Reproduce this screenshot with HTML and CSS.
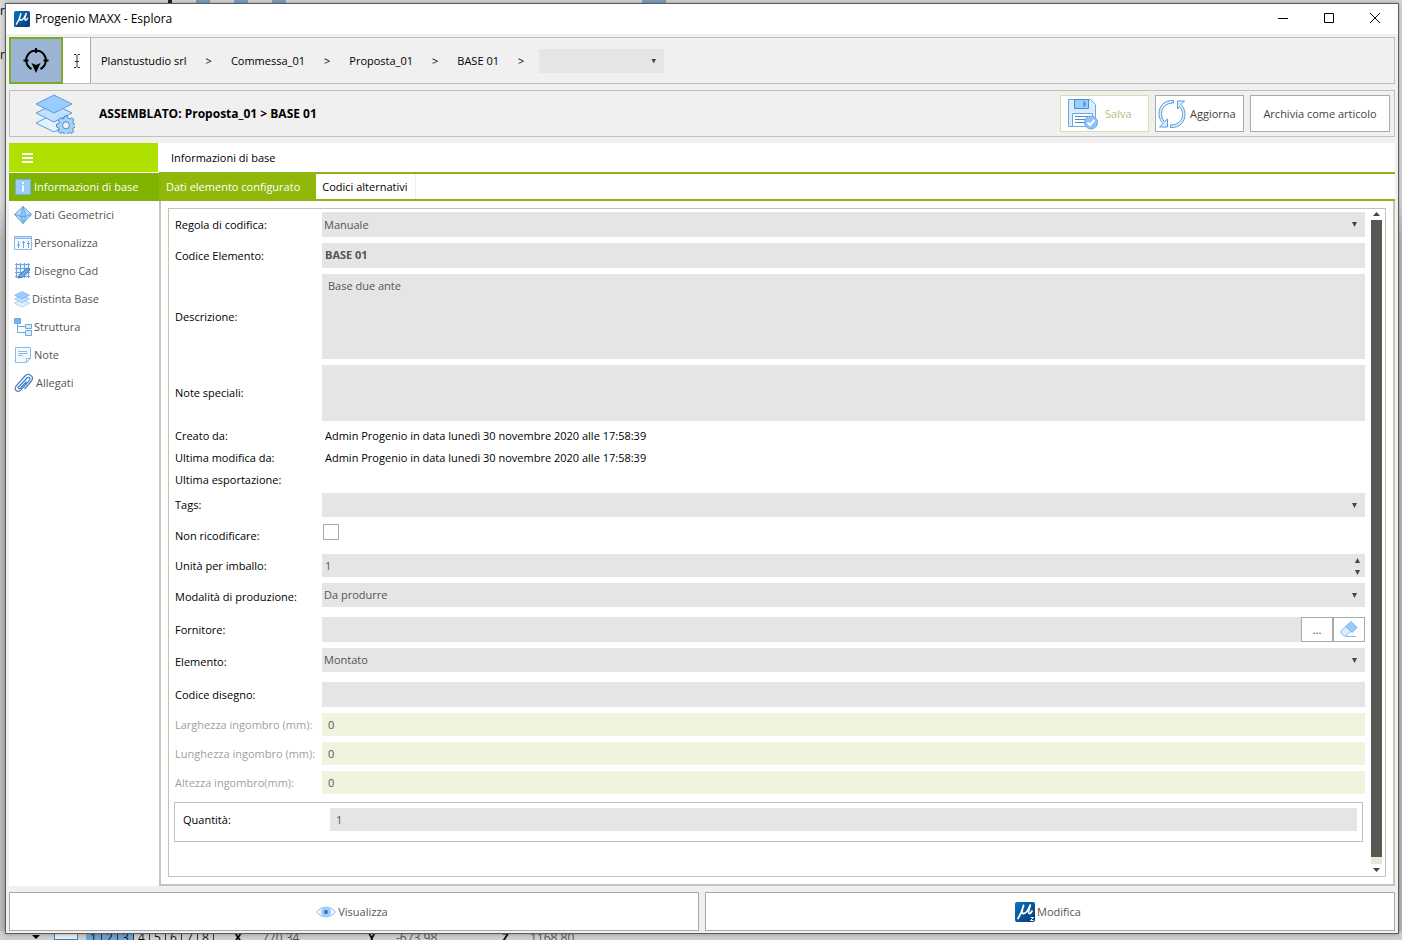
FILE: index.html
```
<!DOCTYPE html>
<html lang="it">
<head>
<meta charset="utf-8">
<title>Progenio MAXX - Esplora</title>
<link rel="stylesheet" href="styles.css">
</head>
<body>
<svg class="defs" aria-hidden="true">
  <defs>
    <linearGradient id="blue" x1="0" y1="0" x2="1" y2="1"><stop offset="0" stop-color="#0873c4"/><stop offset="1" stop-color="#083a70"/></linearGradient>
    <symbol id="mu" viewBox="0 0 20 20">
      <rect width="20" height="20" rx="2" fill="url(#blue)"/>
      <path d="M8.500 3.500C7.500 8 6 12 3 16.500M8.500 4C6.500 9 6.500 11.500 8.500 11.500c2.500 0 5-4 7-9-1.500 4.500-2.800 8.500-1.200 9 1 .3 2-1 2.700-2.500" fill="none" stroke="#fff" stroke-width="1.800" stroke-linecap="round"/>
    </symbol>
    <symbol id="layers" viewBox="0 0 38 38">
      <path d="m1 29 18-9 18 9-18 9z" fill="#e3f2ff" stroke="#5a9bd8"/>
      <path d="m1 19 18-9 18 9-18 9z" fill="#bfe0ff" stroke="#5a9bd8"/>
      <path d="m1 10 18-9 18 9-18 9z" fill="#99ccff" stroke="#5a9bd8"/>
    </symbol>
  </defs>
</svg>

<div class="backdrop" aria-hidden="true">
  <div class="backdrop-top">
    <i class="blob dark"></i><i class="blob"></i><i class="blob"></i><i class="blob"></i><i class="blob wide"></i>
  </div>
  <div class="backdrop-left"><span>or</span><span class="start">b</span><span>er</span></div>
  <div class="backdrop-bottom">
    <i class="tri"></i><i class="tool"></i>
    <span class="pages"><b class="on">1</b><b class="on">2</b><b class="on">3</b><b>4</b><b>5</b><b>6</b><b>7</b><b>8</b></span>
    <strong>X</strong><span class="coord">770.34</span>
    <strong>Y</strong><span class="coord">-673.98</span>
    <strong>Z</strong><span class="coord">1168.80</span>
  </div>
</div>

<div class="window">
  <header class="titlebar">
    <svg class="app-icon"><use href="#mu"/></svg>
    <h1>Progenio MAXX - Esplora</h1>
    <div class="controls">
      <button aria-label="Riduci"><svg viewBox="0 0 12 12"><path d="M1 5.500h10"/></svg></button>
      <button aria-label="Ingrandisci"><svg viewBox="0 0 12 12"><path d="M1.500.500h9v9h-9z"/></svg></button>
      <button aria-label="Chiudi"><svg viewBox="0 0 12 12"><path d="m1 0 10 10M11 0 1 10"/></svg></button>
    </div>
  </header>

  <nav class="panel crumbs" aria-label="Percorso">
    <button class="target" aria-label="Posizione">
      <svg viewBox="0 0 26 26"><path d="M8.500 21A9.800 9.800 0 1 1 17.500 21M13 0v5M.5 12.500h5M20.500 12.500h5" fill="none" stroke="#000" stroke-width="2"/><path d="m8.500 15 4.500 2 4.500-2-4.500 10z"/></svg>
    </button>
    <button class="cursor" aria-label="Testo">
      <svg viewBox="0 0 8 14"><path d="M1 .5h2l1 1 1-1h2M1 13.500h2l1-1 1 1h2M4 1.500v11M2 7.500h4" fill="none" stroke="#333"/></svg>
    </button>
    <ol>
      <li><a href="#">Planstustudio srl</a></li><li>&gt;</li>
      <li><a href="#">Commessa_01</a></li><li>&gt;</li>
      <li><a href="#">Proposta_01</a></li><li>&gt;</li>
      <li><a href="#">BASE 01</a></li><li>&gt;</li>
    </ol>
    <div class="select crumb-select"><select aria-label="Elemento successivo"><option></option></select></div>
  </nav>

  <section class="panel heading">
    <svg class="heading-icon" viewBox="0 0 40 40">
      <use href="#layers" width="38" height="38"/>
      <g transform="translate(31 30)"><path d="M-1.500-8h3l.6 2.300 1.700.7 2-1.200 2.100 2.100-1.200 2 .7 1.700 2.100.6v3l-2.200.6-.7 1.600 1.200 2-2.100 2.100-2-1.200-1.600.7-.6 2h-3l-.6-2-1.700-.7-2 1.200-2.100-2.100 1.200-2-.7-1.600L-9.500 3V.2l2.200-.6.7-1.700-1.200-2 2.100-2.100 2 1.200 1.600-.7z" fill="#a5d1fb" stroke="#4b8bc8"/><circle cy="1.300" r="3.500" fill="#f0f0f0" stroke="#4b8bc8"/></g>
    </svg>
    <h2>ASSEMBLATO: Proposta_01 &gt; BASE 01</h2>
    <div class="actions">
      <button class="save" disabled>
        <svg viewBox="0 0 32 32"><path d="M1.500 1.500h22l5 5v22h-27z" fill="#d9edff" stroke="#6ea6dd"/><path d="M7.500 1.500h14v9h-14z" fill="#99ccff" stroke="#4b8bc8"/><path d="M17.500 3.500v5" stroke="#4b8bc8" stroke-width="2"/><path d="M5.500 15.500h20v13h-20z" fill="#fff" stroke="#6ea6dd"/><path d="M8 18.500h14M8 21.500h12M8 24.500h10" stroke="#4b8bc8"/><circle cx="24" cy="24.500" r="6.500" fill="#8fc4fa" stroke="#6ea6dd"/><path d="m20.500 24.500 2.500 2.500 4.500-5" fill="none" stroke="#fff" stroke-width="2"/></svg>
        <span>Salva</span>
      </button>
      <button class="refresh">
        <svg viewBox="0 0 32 32"><path d="M17.500 2.500C9 2 3 7.500 3 15.500c0 4 1.500 7.500 4 10l-3.500 3.500h8v-8l-3 2.800c-2-2.300-3-5-3-8C5.500 9.500 10 5 17.500 5zM14.500 29.500C23 30 29 24.500 29 16.500c0-4-1.500-7.500-4-10L28.500 3h-7v8l2-2.500c2 2.300 3 5 3 8 0 6-4.500 10.500-12 10.500z" fill="#d9edff" stroke="#5a9bd8"/></svg>
        <span>Aggiorna</span>
      </button>
      <button class="archive">Archivia come articolo</button>
    </div>
  </section>

  <div class="body">
    <aside>
      <button class="menu" aria-label="Menu"><i></i><i></i><i></i></button>
      <ul>
        <li class="active"><a href="#"><svg viewBox="0 0 18 18"><path d="M1.500 1.500h15v15h-15z" fill="#99ccff" stroke="#73aee6"/><path d="M8 4h2v2H8zM8 7.500h2v6H8z" fill="#fff"/></svg>Informazioni di base</a></li>
        <li><a href="#"><svg viewBox="0 0 18 18"><path d="m9 .5 8.500 8L9 17.500.500 8.500z" fill="#b5dafd" stroke="#5a9bd8"/><path d="m9 .5-2.500 10L9 17.500l3-7zM.5 8.500l6 2h5.500l5.500-2" fill="#8dc3f7" stroke="#5a9bd8" stroke-width=".7"/></svg>Dati Geometrici</a></li>
        <li><a href="#"><svg viewBox="0 0 18 18"><path d="M.5 2.500h17v13H.5z" fill="#f5faff" stroke="#8ab9e5"/><path d="M.5 2.500h17v2H.5z" fill="#b5dafd" stroke="#8ab9e5"/><path d="M4.500 7v7M9.500 7v7M14.500 7v7M3 11h3M8 8.500h3M13 9.500h3" stroke="#6ea6dd"/></svg>Personalizza</a></li>
        <li><a href="#"><svg viewBox="0 0 18 18"><path d="M1.500 1.500h14v14h-14z" fill="#e3f2ff"/><path d="M1 2.500h15M1 6.500h15M1 10.500h15M1 14.500h15M2.500 1v15M6.500 1v15M10.500 1v15M14.500 1v15" stroke="#6ea6dd"/><path d="m4 16 2-4 8-6 2 2-7 7z" fill="#6ea9e2" stroke="#3d77b4"/></svg>Disegno Cad</a></li>
        <li class="tight"><a href="#"><svg viewBox="0 0 38 38"><use href="#layers"/></svg>Distinta Base</a></li>
        <li><a href="#"><svg viewBox="0 0 18 18"><path d="M.5.5h6v5h-6z" fill="#78b3ec" stroke="#6ea6dd"/><path d="M3.500 6v8.500h8M3.500 8.500h8" fill="none" stroke="#6ea6dd"/><path d="M11.500 6.500h6v4h-6zM11.500 12.500h6v5h-6z" fill="#d9edff" stroke="#6ea6dd"/></svg>Struttura</a></li>
        <li><a href="#"><svg viewBox="0 0 18 18"><path d="M1.500 1.500h15v11l-4 4h-11z" fill="#f5faff" stroke="#8ab9e5"/><path d="M12.500 16.500v-4h4M4 5.500h9M4 7.500h10M4 9.500h5" fill="none" stroke="#8ab9e5"/></svg>Note</a></li>
        <li class="loose"><a href="#"><svg viewBox="0 0 20 20"><path d="m5 13.500 8-8.500c1.700-1.700 4 .3 2.500 2.300L7 16.800c-3.500 3.700-8-.3-4.800-4L11 3c3.700-4 9.700.7 6.500 5l-7 8M4.500 13c-1.500 2 .7 3.500 2.200 2l5.800-6.500" fill="none" stroke="#3f7fc0" stroke-width="1.200"/></svg>Allegati</a></li>
      </ul>
    </aside>

    <main>
      <h3>Informazioni di base</h3>
      <div class="tabs" role="tablist">
        <button role="tab" aria-selected="true">Dati elemento configurato</button>
        <button role="tab" aria-selected="false">Codici alternativi</button>
      </div>
      <div class="frame">
        <div class="inner">
          <form>
            <div class="row"><label for="regola">Regola di codifica:</label><div class="select"><select id="regola"><option>Manuale</option></select></div></div>
            <div class="row"><label for="codice">Codice Elemento:</label><input class="code" id="codice" value="BASE 01" readonly></div>
            <div class="row description"><label for="descr">Descrizione:</label><textarea id="descr" readonly>Base due ante</textarea></div>
            <div class="row notes"><label for="notes">Note speciali:</label><textarea id="notes" readonly></textarea></div>
            <div class="row info"><span>Creato da:</span><output>Admin Progenio in data lunedì 30 novembre 2020 alle 17:58:39</output></div>
            <div class="row info"><span>Ultima modifica da:</span><output>Admin Progenio in data lunedì 30 novembre 2020 alle 17:58:39</output></div>
            <div class="row info"><span>Ultima esportazione:</span></div>
            <div class="row tags"><label for="tags">Tags:</label><div class="select"><select id="tags"><option></option></select></div></div>
            <div class="row check"><label for="ric">Non ricodificare:</label><input type="checkbox" id="ric"></div>
            <div class="row short"><label for="unita">Unità per imballo:</label><div class="spinner"><input id="unita" value="1" readonly></div></div>
            <div class="row mid"><label for="modo">Modalità di produzione:</label><div class="select"><select id="modo"><option>Da produrre</option></select></div></div>
            <div class="row spaced"><label for="forn">Fornitore:</label>
              <div class="supplier"><input id="forn" readonly><button type="button" aria-label="Sfoglia">...</button><button type="button" aria-label="Cancella"><svg viewBox="0 0 18 18"><path d="m1 10 6-6 5 5-6 6H4l-3-3z" fill="#d9edff" stroke="#8ab9e5"/><path d="m6 5.500 5-5 6 6-5 5z" fill="#99ccff" stroke="#73aee6"/><path d="M6 15.500h10" stroke="#8ab9e5"/></svg></button></div></div>
            <div class="row mid"><label for="elem">Elemento:</label><div class="select"><select id="elem"><option>Montato</option></select></div></div>
            <div class="row spaced"><label for="dis">Codice disegno:</label><input id="dis" readonly></div>
            <div class="row short dim"><label for="larg">Larghezza ingombro (mm):</label><input id="larg" value="0" readonly></div>
            <div class="row short dim"><label for="lung">Lunghezza ingombro (mm):</label><input id="lung" value="0" readonly></div>
            <div class="row short dim"><label for="alt">Altezza ingombro(mm):</label><input id="alt" value="0" readonly></div>
            <div class="quantity"><label for="qta">Quantità:</label><input id="qta" value="1" readonly></div>
          </form>
          <div class="scrollbar" aria-hidden="true"><i class="up"></i><div class="track"><div class="thumb"></div></div><i class="down"></i></div>
        </div>
      </div>
    </main>
  </div>

  <footer>
    <button><svg viewBox="0 0 20 20"><path d="M.5 10C6 3.500 14 3.500 19.500 10 14 16.500 6 16.500.500 10z" fill="#f5faff" stroke="#8ab9e5"/><circle cx="10" cy="10" r="5" fill="#99ccff"/><circle cx="10" cy="10" r="2" fill="#2f75bb"/></svg>Visualizza</button>
    <button><svg viewBox="0 0 20 20"><use href="#mu"/><path d="M15.500 15.500h3l-3 3h3" fill="none" stroke="#fff"/></svg>Modifica</button>
  </footer>
</div>
</body>
</html>
```
FILE: styles.css
```
* { box-sizing: border-box; }
body { margin: 0; min-height: 100vh; display: flex; padding: 3px 3px 5px 5px; position: relative; background: #c4c4c4; font: 11px/16px "Open Sans", "Noto Sans", sans-serif; color: #000; }
button, input, select, textarea { font: inherit; color: inherit; margin: 0; border: 0; border-radius: 0; outline: 0; }
h1, h2, h3, ul, ol { margin: 0; padding: 0; list-style: none; font-size: inherit; font-weight: normal; }
a { color: inherit; text-decoration: none; }
svg { flex: none; display: block; }
.defs { position: absolute; width: 0; height: 0; }

.backdrop { position: absolute; inset: 0; overflow: hidden; background: linear-gradient(#ddd 0 200px, #bbb 240px); }
.backdrop-top { display: flex; gap: 24px; padding-left: 168px; height: 3px; background: #d8d8d8; }
.blob { width: 14px; height: 3px; background: #7fa3c4; }
.blob.dark { width: 4px; background: #222; }
.blob.wide { width: 24px; margin-left: 332px; }
.backdrop-left { display: grid; gap: 6px; width: 5px; font-size: 12px; direction: rtl; }
.backdrop-left .start { direction: ltr; }
.backdrop-bottom { position: absolute; inset: auto 0 0; height: 9px; padding-left: 32px; display: flex; gap: 20px; background: #d0d0d0; font-size: 12px; line-height: 14px; color: #555; }
.backdrop-bottom strong { width: 8px; color: #000; }
.backdrop-bottom .coord { width: 86px; }
.tri { border: 4px solid transparent; border-top-color: #000; border-bottom: 0; height: 0; margin-top: 4px; }
.tool { width: 24px; margin-left: -6px; border: 1px solid #3b84bd; background: #eee; }
.pages { display: flex; margin-left: -12px; color: #111; }
.pages b { width: 16px; text-align: center; font-weight: normal; border-right: 1px solid #333; }
.pages .on { background: #6fa3d3; }

.window { position: relative; flex: 1; display: flex; flex-direction: column; padding: 0 3px 2px; border: 1px solid #5c5c5c; background: #f0f0f0; box-shadow: 0 0 5px #0005; }
body { padding-bottom: 6px; }
.titlebar { display: flex; align-items: center; gap: 5px; height: 30px; margin: 0 -3px 3px; padding-left: 8px; background: #fff; font-size: 12px; }
.app-icon { width: 16px; height: 16px; }
.controls { margin-left: auto; display: flex; }
.controls button { width: 46px; height: 30px; padding: 0; display: grid; place-items: center; background: none; }
.controls svg { width: 12px; height: 12px; fill: none; stroke: #000; }

.panel { display: flex; align-items: center; height: 47px; margin-bottom: 6px; border: 1px solid #bfc0b6; }
.target { align-self: stretch; width: 54px; margin: -1px 0 -1px -1px; padding: 0; display: grid; place-items: center; border: 2px solid #80a726; background: #9bb4d3; }
.target svg { width: 26px; height: 26px; }
.cursor { align-self: stretch; width: 28px; padding: 0; display: grid; place-items: center; border-right: 1px solid #aaa; background: #fff; }
.cursor svg { width: 8px; height: 14px; }
.crumbs ol { display: flex; gap: 19px; margin: 0 15px 0 10px; }
.crumb-select { width: 125px; height: 24px; }

.heading-icon { width: 40px; height: 40px; margin-left: 25px; }
.heading h2 { margin-left: 24px; font-size: 12px; font-weight: bold; }
.actions { margin-left: auto; display: flex; gap: 6px; padding-right: 4px; }
.actions button { height: 37px; display: flex; align-items: center; padding: 0; border: 1px solid #ababab; background: #fff; color: #444; }
.actions svg { width: 32px; height: 32px; }
.actions .save { width: 89px; gap: 6px; padding-left: 6px; border-color: #d5dfb0; color: #b0c078; }
.actions .refresh { width: 89px; gap: 2px; }
.actions .archive { width: 140px; justify-content: center; }

.body { flex: 1; display: flex; }
aside { flex: none; width: 150px; background: #fff; }
.menu { width: 149px; height: 29px; padding: 1px 0 0 13px; display: grid; align-content: center; gap: 2px; background: #aee000; }
.menu i { width: 11px; height: 2px; background: #fff; }
aside ul { padding-top: 1px; }
aside li { height: 28px; color: #555; }
aside a { height: 100%; display: flex; align-items: center; gap: 2px; padding-left: 5px; }
aside li.active { background: #80b200; color: #fff; }
aside li svg { width: 18px; height: 18px; }
aside .tight svg { width: 16px; height: 16px; }
aside .loose svg { width: 20px; height: 20px; }

main { flex: 1; min-width: 0; display: flex; flex-direction: column; background: #fff; }
main h3 { height: 29px; padding: 7px 12px; }
.tabs { display: flex; height: 29px; border: solid #93b01b; border-width: 2px 0; }
.tabs button { padding: 0 7px; border-right: 1px solid #eee; background: #fff; }
.tabs [aria-selected="true"] { margin: -1px 0; padding: 0 16px 0 7px; border: 0; background: #8fb80b; color: #fff; }
.tabs [aria-selected="false"] { padding-left: 6px; }
.frame { flex: 1; display: flex; padding: 7px; border: solid #c5c5b8; border-width: 0 2px 2px; }
.inner { flex: 1; display: flex; border: 1px solid #c3c3b8; }
form { flex: 1; min-width: 0; padding: 3px 6px 0; }
.row { display: grid; grid-template-columns: 147px 1fr; align-items: center; height: 25px; margin-bottom: 6px; }
.row > :last-child:not(:first-child) { height: 100%; }
.row input, .row textarea, .row select, .quantity input { width: 100%; min-width: 0; padding: 0 3px; background: #e5e5e5; color: #555; }
.row .code { padding-bottom: 2px; font-weight: bold; }
.description { height: 85px; }
.notes { height: 56px; }
.row textarea { display: block; padding: 4px 6px; resize: none; }
.row.info { height: 18px; margin-bottom: 4px; }
.info output { padding: 1px 0 0 3px; }
.tags, .mid { height: 24px; }
.row input[type="checkbox"] { appearance: none; align-self: start; width: 16px; height: 16px; margin: 1px; padding: 0; border: 1px solid #aaa; background: #fff; }
.check > input[type="checkbox"]:last-child:not(:first-child) { height: 16px; }
.short { height: 23px; }
.mid label { padding-top: 3px; }
.row.spaced { margin-top: 10px; }
.select, .spinner { position: relative; background: #e5e5e5; }
.select select { appearance: none; width: 100%; height: 100%; padding: 0 2px; background: #e5e5e5; color: #555; }
.spinner input { height: 100%; }
.select::after, .spinner::before, .spinner::after { content: ""; position: absolute; right: 8px; top: 10px; width: 5px; height: 5px; background: #444; clip-path: polygon(0 0, 100% 0, 50% 100%); pointer-events: none; }
.spinner::before { right: 5px; top: 4px; clip-path: polygon(50% 0, 100% 100%, 0 100%); }
.spinner::after { right: 5px; top: 16px; }
.supplier { display: flex; }
.supplier input { flex: 1; }
.supplier button { width: 32px; padding: 0; display: grid; place-items: center; border: 1px solid #aaa; background: #fff; color: #444; }
.supplier svg { width: 18px; height: 18px; }
.dim label { color: #a0a0a0; }
.row.dim input { padding: 0 6px; background: #eef4dd; }
.quantity { display: grid; grid-template-columns: 147px 1fr; height: 40px; margin: 8px 2px 0 -1px; padding: 5px 5px 10px 8px; align-items: center; border: 1px solid #bfbfbb; }
.quantity input { height: 23px; padding: 0 6px; }

.scrollbar { flex: none; width: 11px; margin-right: 3px; display: flex; flex-direction: column; align-items: center; gap: 4px; padding: 3px 0 4px; }
.track { flex: 1; width: 11px; padding-bottom: 7px; background: #e8e8dc; }
.thumb { height: 100%; background: #585954; }
.up, .down { width: 7px; height: 4px; background: #444; clip-path: polygon(50% 0, 100% 100%, 0 100%); }
.down { clip-path: polygon(0 0, 100% 0, 50% 100%); }

footer { display: grid; grid-template-columns: 1fr 1fr; gap: 6px; margin-top: 6px; }
footer button { height: 39px; display: flex; align-items: center; justify-content: center; gap: 2px; padding: 0 6px 0 2px; border: 1px solid #a9a9a9; background: #fff; color: #555; }
footer svg { width: 20px; height: 20px; }
```
